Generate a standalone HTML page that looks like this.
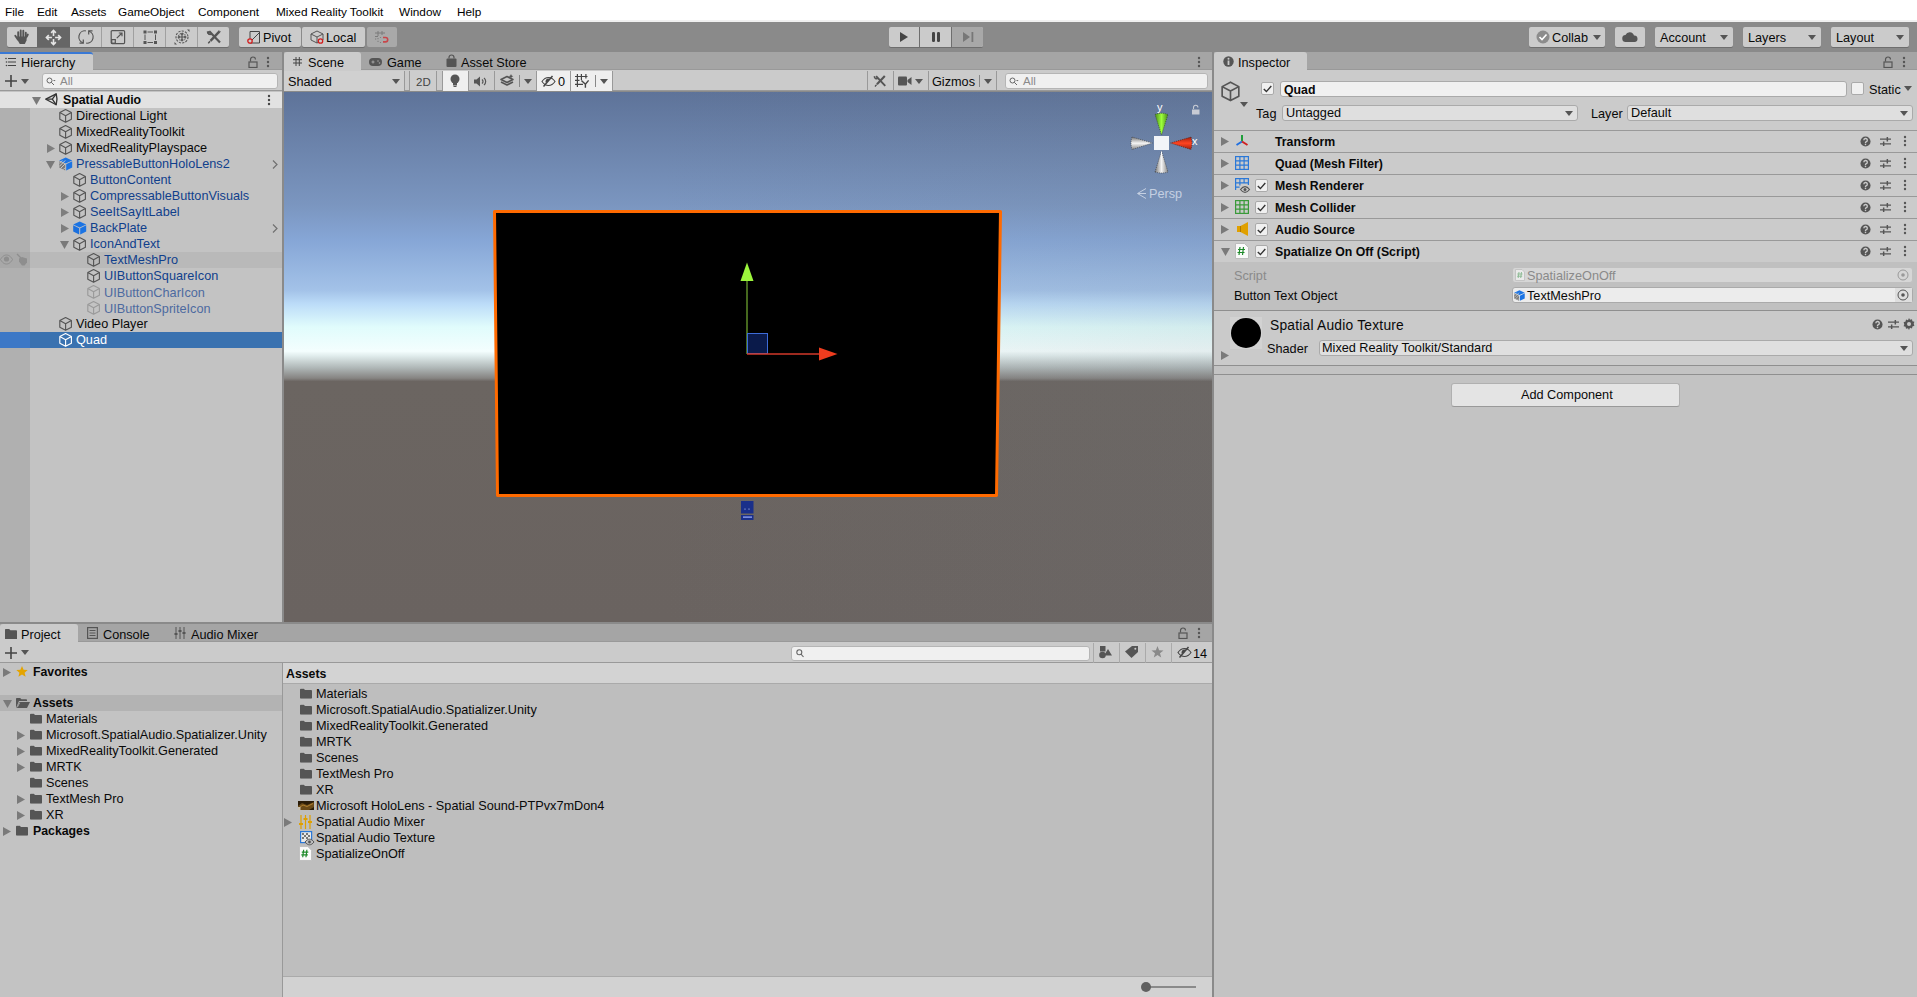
<!DOCTYPE html>
<html><head><meta charset="utf-8">
<style>
*{box-sizing:border-box;margin:0;padding:0}
html,body{width:1917px;height:997px;overflow:hidden;background:#8a8a8a;font-family:"Liberation Sans",sans-serif;font-size:12.7px;color:#090909}
.a{position:absolute}
.t{position:absolute;white-space:nowrap;line-height:16px}
.b{font-weight:bold;font-size:12.3px}
svg{position:absolute;overflow:visible}
/* menu */
#menu{left:0;top:0;width:1917px;height:22px;background:#fff;border-bottom:2px solid #f0f0f0}
#menu span{position:absolute;top:5px;font-size:11.8px;line-height:14px;color:#000}
/* toolbar */
#tb{left:0;top:22px;width:1917px;height:30px;background:#8a8a8a}
.btn{position:absolute;top:27px;height:20px;background:#cbcbcb;border-radius:2px;box-shadow:0 1px 0 #6e6e6e}
/* panels */
.tabbar{position:absolute;height:18px;background:#a5a5a5;border-bottom:1px solid #999}
.tab{position:absolute;top:0;height:18px;background:#cbcbcb;border-radius:3px 3px 0 0}
.ptool{position:absolute;height:21px;background:#cbcbcb;border-bottom:1px solid #999}
.search{position:absolute;height:15px;background:#f0f0f0;border:1px solid #b5b5b5;border-radius:3px}
.sep{position:absolute;background:#999}
.hrow{position:absolute;height:16px;left:30px;width:252px}
.blue{color:#10408c}
.dim{color:#4f6fa6}
.dimi{opacity:.55}
.ih{position:absolute;height:22px;left:1214px;width:703px;background:#cbcbcb;border-top:1px solid #999}
.chk{position:absolute;width:13px;height:13px;background:#f0f0f0;border:1px solid #aaa;border-radius:2px}
.fld{position:absolute;height:16px;background:#f0f0f0;border:1px solid #aaa;border-radius:3px}
.dd{position:absolute;height:16px;background:#dfdfdf;border:1px solid #aaa;border-radius:3px}
</style></head><body>
<svg width="0" height="0" style="position:absolute"><defs>
<symbol id="cube" viewBox="0 0 16 16"><path d="M6.6 1.5L12.4 4.6V11.3L6.6 14.3L0.8 11.3V4.6Z M0.8 4.6L6.6 7.7L12.4 4.6 M6.6 7.7V14.3" fill="none" stroke="currentColor" stroke-width="1.15" stroke-linejoin="round"/></symbol>
<symbol id="prefab" viewBox="1.3 0 16 16"><path d="M8 1.5L14.5 4.5L8 7.5L1.5 4.5Z" fill="#1b74e4"/><path d="M8.5 8.2L14.5 5.3V11.6L8.5 14.6Z" fill="#1b74e4"/><path d="M1.5 5.3L7.5 8.2V14.6L1.5 11.6Z" fill="#7a7a7a"/><path d="M1.5 7.5l3-3M1.5 10.5l6-6M3 12.3l4.5-4.5M5.5 13.6l2-2" stroke="#c8c8c8" stroke-width="1"/></symbol>
<symbol id="prefabs" viewBox="1.3 0 16 16"><path d="M8 1.5L14.5 4.5L8 7.5L1.5 4.5Z" fill="#1b74e4"/><path d="M8.5 8.2L14.5 5.3V11.6L8.5 14.6Z" fill="#1b74e4"/><path d="M1.5 5.3L7.5 8.2V14.6L1.5 11.6Z" fill="#1b70de"/></symbol>
<symbol id="tri-d" viewBox="0 0 9 8"><path d="M0 0h9L4.5 8z" fill="currentColor"/></symbol>
<symbol id="tri-r" viewBox="0 0 8 9"><path d="M0 0v9l8-4.5z" fill="currentColor"/></symbol>
<symbol id="folder" viewBox="0 0 14 12"><path d="M0 1.5a1 1 0 0 1 1-1h3.5l1.3 1.5H13a1 1 0 0 1 1 1V11a1 1 0 0 1-1 1H1a1 1 0 0 1-1-1z" fill="currentColor"/></symbol>
<symbol id="dots" viewBox="0 0 4 12"><circle cx="2" cy="2" r="1.2" fill="currentColor"/><circle cx="2" cy="6" r="1.2" fill="currentColor"/><circle cx="2" cy="10" r="1.2" fill="currentColor"/></symbol>
<symbol id="lock" viewBox="0 0 10 12"><path d="M2.5 5.5V3.5a2.5 2.5 0 0 1 5 0" fill="none" stroke="currentColor" stroke-width="1.2"/><rect x="1" y="6" width="8" height="5.5" fill="none" stroke="currentColor" stroke-width="1.2"/></symbol>
<symbol id="help" viewBox="0 0 12 12"><circle cx="6" cy="6" r="5.5" fill="currentColor"/><path d="M4.2 4.6a1.9 1.9 0 1 1 2.4 1.8c-.5.2-.6.5-.6 1v.4" fill="none" stroke="#cbcbcb" stroke-width="1.5"/><circle cx="6" cy="9.3" r=".9" fill="#cbcbcb"/></symbol>
<symbol id="preset" viewBox="0 0 12 12"><path d="M0 3.5h12M0 8.5h12" stroke="currentColor" stroke-width="1.3"/><path d="M8 1v5M4 6v5" stroke="currentColor" stroke-width="1.6"/></symbol>
</defs></svg>

<!-- MENU -->
<div id="menu" class="a">
<span style="left:5px">File</span>
<span style="left:37px">Edit</span>
<span style="left:71px">Assets</span>
<span style="left:118px">GameObject</span>
<span style="left:198px">Component</span>
<span style="left:276px">Mixed Reality Toolkit</span>
<span style="left:399px">Window</span>
<span style="left:457px">Help</span>
</div>

<!-- MAIN TOOLBAR -->
<div id="tb" class="a"></div>
<div class="btn" style="left:7px;width:222px"></div>
<div class="a" style="left:37px;top:27px;width:33px;height:20px;background:#666"></div>
<div class="sep" style="left:101px;top:27px;width:1px;height:20px;background:#a0a0a0"></div>
<div class="sep" style="left:133px;top:27px;width:1px;height:20px;background:#a0a0a0"></div>
<div class="sep" style="left:165px;top:27px;width:1px;height:20px;background:#a0a0a0"></div>
<div class="sep" style="left:197px;top:27px;width:1px;height:20px;background:#a0a0a0"></div>
<svg style="left:14px;top:29px" width="16" height="16" viewBox="0 0 16 16"><path d="M4.2 9.5V3.2M6.7 8V1.5M9.3 8V1.8M11.8 8.5V3.8" stroke="#555" stroke-width="1.9" stroke-linecap="round"/><path d="M1.3 6.8L3.8 10.5" stroke="#555" stroke-width="1.9" stroke-linecap="round"/><path d="M3.3 7.5H12.8L12.5 11.5 10.8 15H5.8L3.3 10.8z" fill="#555"/><path d="M12.8 7.5L13.8 5.5" stroke="#555" stroke-width="1.9" stroke-linecap="round"/></svg>
<svg style="left:45px;top:29px" width="17" height="17" viewBox="0 0 16 16" fill="none" stroke="#e6e6e6" stroke-width="1.5"><path d="M8 2v4.5M8 9.5V14M2 8h4.5M9.5 8H14"/><path d="M5.8 3.6L8 1.4l2.2 2.2M5.8 12.4L8 14.6l2.2-2.2M3.6 5.8L1.4 8l2.2 2.2M12.4 5.8L14.6 8l-2.2 2.2" stroke-width="1.6"/></svg>
<svg style="left:78px;top:29px" width="16" height="16" viewBox="0 0 16 16" fill="none" stroke="#555" stroke-width="1.2"><path d="M7.8 1.8A6.2 6.2 0 0 0 5 13.8"/><path d="M8.2 14.2A6.2 6.2 0 0 0 11 2.2"/><path d="M1.5 14.2H5.3V10.5M14.5 1.8H10.7V5.5"/></svg>
<svg style="left:110px;top:29px" width="16" height="16" viewBox="0 0 16 16" fill="none" stroke="#555" stroke-width="1.2"><rect x="1.2" y="1.6" width="13.4" height="13" rx="1"/><rect x="1.7" y="10.6" width="3.6" height="3.6"/><path d="M6.8 9.2L12 4M8.8 4H12V7.2"/></svg>
<svg style="left:142px;top:29px" width="16" height="16" viewBox="0 0 16 16"><g fill="#555"><rect x="1.5" y="1.5" width="3" height="3"/><rect x="12" y="1.5" width="3" height="3"/><rect x="1.5" y="12" width="3" height="3"/><rect x="12" y="12" width="3" height="3"/></g><path d="M5.5 3h5.5M5.5 13.5h5.5M3 5.5v5.5M13.5 5.5v5.5" stroke="#555" stroke-width="1"/></svg>
<svg style="left:174px;top:29px" width="16" height="16" viewBox="0 0 16 16" fill="none" stroke="#555"><circle cx="8" cy="8" r="6" stroke-width="1.1" stroke-dasharray="2.2 1.2"/><circle cx="8" cy="8" r="3.8" stroke-width="1" stroke-dasharray="1.5 1"/><path d="M8 4.5v7M4.5 8h7" stroke-width="1.2"/><path d="M6.8 5.7L8 4.5l1.2 1.2M6.8 10.3L8 11.5l1.2-1.2M5.7 6.8L4.5 8l1.2 1.2M10.3 6.8L11.5 8l-1.2 1.2" stroke-width="1.2"/><path d="M13 0.5h2.5V3zM3 15.5H.5V13z" fill="#555" stroke="none"/></svg>
<svg style="left:206px;top:29px" width="16" height="16" viewBox="0 0 16 16"><path d="M3.5 2.5L14 13.5" stroke="#555" stroke-width="2.2"/><path d="M1.2 3.5A2.8 2.8 0 0 0 5 5.8L3.2 4.2 4.3 1.7A2.8 2.8 0 0 0 1.2 3.5z" fill="#555"/><path d="M1.6 2.4a2.6 2.6 0 0 0 3.8 2.7" stroke="#555" stroke-width="1.6" fill="none"/><path d="M13.5 2.3L4.5 11.8" stroke="#555" stroke-width="2.4"/><path d="M4.1 12.2L2.3 14.3 3 13.2" stroke="#555" stroke-width="1.4"/><path d="M13 1.5l1.5 1.5" stroke="#555" stroke-width="1"/></svg>
<div class="sep" style="left:229px;top:27px;width:1px;height:20px;background:#8a8a8a"></div>
<div class="btn" style="left:239px;width:62px"></div>
<div class="btn" style="left:302px;width:63px"></div>
<div class="a" style="left:367px;top:27px;width:30px;height:20px;background:#a9a9a9;border-radius:2px"></div>
<svg style="left:247px;top:30px" width="14" height="14" viewBox="0 0 14 14" fill="none"><path d="M3 1.5h9.5V13H3z" stroke="#444" stroke-width="1"/><path d="M5 10l7-7" stroke="#444" stroke-width="1"/><circle cx="3" cy="11" r="2.2" stroke="#d31e1e" stroke-width="1.3" fill="#cbcbcb"/></svg>
<span class="t" style="left:263px;top:30px;font-size:12.7px">Pivot</span>
<svg style="left:310px;top:30px" width="14" height="14" viewBox="0 0 14 14" fill="none" stroke="#555" stroke-width="1"><path d="M1 4l6-3 6 3v6l-6 3-6-3z M1 4l6 3 6-3M7 7v6"/><circle cx="10.5" cy="11" r="2.2" stroke="#d31e1e" stroke-width="1.3" fill="#cbcbcb"/></svg>
<span class="t" style="left:326px;top:30px;font-size:12.7px">Local</span>
<svg style="left:374px;top:30px" width="15" height="14" viewBox="0 0 15 14" fill="none"><path d="M4 1v5M8 1v4M1 3h10M1 6.5h3" stroke="#7a7a7a" stroke-width="1"/><path d="M4 8v1.2M4 10.8V12M1 9h1.2" stroke="#7a7a7a" stroke-width="1"/><circle cx="6.5" cy="7.5" r=".6" fill="#7a7a7a"/><circle cx="6.5" cy="12.5" r=".6" fill="#7a7a7a"/><path d="M9 7.5h2.5a2.2 2.2 0 0 1 0 4.4H9" stroke="#c8464a" stroke-width="1.6"/></svg>
<div class="btn" style="left:889px;width:94px;background:#cbcbcb"></div>
<div class="a" style="left:951px;top:27px;width:32px;height:20px;background:#a8a8a8;border-radius:0 2px 2px 0"></div>
<div class="sep" style="left:919px;top:27px;width:1px;height:20px;background:#6e6e6e"></div>
<div class="sep" style="left:951px;top:27px;width:1px;height:20px;background:#6e6e6e"></div>
<svg style="left:900px;top:32px" width="10" height="12" viewBox="0 0 10 12"><path d="M0 0v10l8-5z" fill="#444"/></svg>
<svg style="left:932px;top:32px" width="10" height="12" viewBox="0 0 10 12"><rect x="0" y="0" width="3" height="10" rx="1.2" fill="#444"/><rect x="5" y="0" width="3" height="10" rx="1.2" fill="#444"/></svg>
<svg style="left:963px;top:32px" width="12" height="12" viewBox="0 0 12 12"><path d="M0 0v10l7-5z" fill="#777"/><rect x="8.5" y="0" width="1.8" height="10" fill="#777"/></svg>
<div class="btn" style="left:1529px;width:76px"></div>
<svg style="left:1536px;top:30px" width="14" height="14" viewBox="0 0 14 14"><circle cx="7" cy="7" r="6.5" fill="#8c8c8c"/><path d="M3.5 7l2.5 2.5 4.5-5" stroke="#fff" stroke-width="1.6" fill="none"/></svg>
<span class="t" style="left:1552px;top:30px">Collab</span>
<svg style="left:1593px;top:35px" width="8" height="5" viewBox="0 0 8 5"><path d="M0 0h8L4 5z" fill="#555"/></svg>
<div class="btn" style="left:1615px;width:30px"></div>
<svg style="left:1622px;top:31px" width="16" height="12" viewBox="0 0 16 12"><path d="M4 11a3.5 3.5 0 0 1-.5-7A4.5 4.5 0 0 1 12 4.5 3.2 3.2 0 0 1 12.5 11z" fill="#555"/></svg>
<div class="btn" style="left:1655px;width:78px"></div>
<span class="t" style="left:1660px;top:30px">Account</span>
<svg style="left:1720px;top:35px" width="8" height="5" viewBox="0 0 8 5"><path d="M0 0h8L4 5z" fill="#555"/></svg>
<div class="btn" style="left:1743px;width:78px"></div>
<span class="t" style="left:1748px;top:30px">Layers</span>
<svg style="left:1808px;top:35px" width="8" height="5" viewBox="0 0 8 5"><path d="M0 0h8L4 5z" fill="#555"/></svg>
<div class="btn" style="left:1831px;width:78px"></div>
<span class="t" style="left:1836px;top:30px">Layout</span>
<svg style="left:1896px;top:35px" width="8" height="5" viewBox="0 0 8 5"><path d="M0 0h8L4 5z" fill="#555"/></svg>

<!-- HIERARCHY -->
<div class="a" style="left:0;top:52px;width:282px;height:570px;background:#c3c3c3"></div>
<div class="tabbar" style="left:0;top:52px;width:282px"></div>
<div class="tab" style="left:0;top:52px;width:93px;border-top:2px solid #3a79d5;border-radius:0 3px 0 0"></div>
<div class="ptool" style="left:0;top:70px;width:282px"></div>
<div class="a" style="left:0;top:108px;width:30px;height:514px;background:#b0b0b0"></div>
<div class="a" style="left:0;top:92px;width:282px;height:16px;background:#e2e2e2"></div>
<svg style="left:5px;top:57px;color:#444" width="11" height="10" viewBox="0 0 11 10"><path d="M3 1.5h8M3 5h8M3 8.5h8" stroke="#444" stroke-width="1.2"/><circle cx="1" cy="1.5" r=".8" fill="#444"/><circle cx="1.5" cy="5" r=".8" fill="#444"/><circle cx="1.5" cy="8.5" r=".8" fill="#444"/></svg>
<span class="t" style="left:21px;top:55px">Hierarchy</span>
<svg style="left:248px;top:56px;color:#555" width="10" height="12"><use href="#lock"/></svg>
<svg style="left:266px;top:56px;color:#555" width="4" height="12"><use href="#dots"/></svg>
<svg style="left:5px;top:75px" width="12" height="12" viewBox="0 0 12 12"><path d="M6 0v12M0 6h12" stroke="#444" stroke-width="1.6"/></svg>
<svg style="left:21px;top:79px" width="8" height="5" viewBox="0 0 8 5"><path d="M0 0h8L4 5z" fill="#555"/></svg>
<div class="search" style="left:42px;top:73px;width:236px;height:16px"></div>
<svg style="left:46px;top:77px" width="10" height="9" viewBox="0 0 10 9" fill="none" stroke="#666" stroke-width="1"><circle cx="3.5" cy="3.5" r="2.5"/><path d="M5.3 5.3L8 8"/><path d="M7 3h2.6L8.3 4.3z" fill="#666" stroke="none"/></svg>
<span class="t" style="left:60px;top:73px;color:#8a8a8a;font-size:11.5px">All</span>
<svg style="left:32px;top:97px;color:#7a7a7a" width="9" height="8"><use href="#tri-d"/></svg>
<svg style="left:45px;top:93px" width="13" height="13" viewBox="0 0 13 13" fill="none" stroke="#333" stroke-width="1.3" stroke-linejoin="round"><path d="M.8 6.2L11.2 .8Q12.8 6.2 11.2 11.8Z"/><path d="M.8 6.2H7.3L11.2 .8M7.3 6.2L11.2 11.8"/></svg>
<span class="t b" style="left:63px;top:92px;color:#090909">Spatial Audio</span>
<svg style="left:59px;top:108px;color:#555" width="16" height="16"><use href="#cube"/></svg>
<span class="t" style="left:76px;top:108px;color:#090909">Directional Light</span>
<svg style="left:59px;top:124px;color:#555" width="16" height="16"><use href="#cube"/></svg>
<span class="t" style="left:76px;top:124px;color:#090909">MixedRealityToolkit</span>
<svg style="left:47px;top:144px;color:#7e7e7e" width="8" height="9"><use href="#tri-r"/></svg>
<svg style="left:59px;top:140px;color:#555" width="16" height="16"><use href="#cube"/></svg>
<span class="t" style="left:76px;top:140px;color:#090909">MixedRealityPlayspace</span>
<svg style="left:46px;top:161px;color:#7a7a7a" width="9" height="8"><use href="#tri-d"/></svg>
<svg style="left:59px;top:156px;color:#555" width="16" height="16"><use href="#prefab"/></svg>
<span class="t" style="left:76px;top:156px;color:#10408c">PressableButtonHoloLens2</span>
<svg style="left:272px;top:160px" width="6" height="9" viewBox="0 0 6 9"><path d="M1 .5l4 4-4 4" fill="none" stroke="#707070" stroke-width="1.2"/></svg>
<svg style="left:73px;top:172px;color:#555" width="16" height="16"><use href="#cube"/></svg>
<span class="t" style="left:90px;top:172px;color:#10408c">ButtonContent</span>
<svg style="left:61px;top:192px;color:#7e7e7e" width="8" height="9"><use href="#tri-r"/></svg>
<svg style="left:73px;top:188px;color:#555" width="16" height="16"><use href="#cube"/></svg>
<span class="t" style="left:90px;top:188px;color:#10408c">CompressableButtonVisuals</span>
<svg style="left:61px;top:208px;color:#7e7e7e" width="8" height="9"><use href="#tri-r"/></svg>
<svg style="left:73px;top:204px;color:#555" width="16" height="16"><use href="#cube"/></svg>
<span class="t" style="left:90px;top:204px;color:#10408c">SeeItSayItLabel</span>
<svg style="left:61px;top:224px;color:#7e7e7e" width="8" height="9"><use href="#tri-r"/></svg>
<svg style="left:73px;top:220px;color:#555" width="16" height="16"><use href="#prefabs"/></svg>
<span class="t" style="left:90px;top:220px;color:#10408c">BackPlate</span>
<svg style="left:272px;top:224px" width="6" height="9" viewBox="0 0 6 9"><path d="M1 .5l4 4-4 4" fill="none" stroke="#707070" stroke-width="1.2"/></svg>
<svg style="left:60px;top:241px;color:#7a7a7a" width="9" height="8"><use href="#tri-d"/></svg>
<svg style="left:73px;top:236px;color:#555" width="16" height="16"><use href="#cube"/></svg>
<span class="t" style="left:90px;top:236px;color:#10408c">IconAndText</span>
<div class="a" style="left:30px;top:252px;width:252px;height:16px;background:#b9b9b9"></div>
<div class="a" style="left:0;top:252px;width:30px;height:16px;background:#a8a8a8"></div>
<svg style="left:0;top:254px" width="13" height="11" viewBox="0 0 13 11"><path d="M.5 5.5C2.5 2 4.5 1 6.5 1s4 1 6 4.5c-2 3.5-4 4.5-6 4.5s-4-1-6-4.5z" fill="none" stroke="#8e8e8e" stroke-width="1"/><circle cx="6.5" cy="5" r="2.6" fill="#8e8e8e"/></svg>
<svg style="left:16px;top:253px" width="12" height="13" viewBox="0 0 12 13"><path d="M1 1l4 4" stroke="#8e8e8e" stroke-width="1.3"/><path d="M3 5.5l3-1.5 5 1.5v4l-2.5 3H6L3 8.5z" fill="#8e8e8e"/></svg>
<svg style="left:87px;top:252px;color:#555" width="16" height="16"><use href="#cube"/></svg>
<span class="t" style="left:104px;top:252px;color:#10408c">TextMeshPro</span>
<svg style="left:87px;top:268px;color:#555" width="16" height="16"><use href="#cube"/></svg>
<span class="t" style="left:104px;top:268px;color:#10408c">UIButtonSquareIcon</span>
<svg style="left:87px;top:284px;color:#9a9a9a" width="16" height="16"><use href="#cube"/></svg>
<span class="t" style="left:104px;top:285px;color:#4d6aa0">UIButtonCharIcon</span>
<svg style="left:87px;top:300px;color:#9a9a9a" width="16" height="16"><use href="#cube"/></svg>
<span class="t" style="left:104px;top:301px;color:#4d6aa0">UIButtonSpriteIcon</span>
<svg style="left:59px;top:316px;color:#555" width="16" height="16"><use href="#cube"/></svg>
<span class="t" style="left:76px;top:316px;color:#090909">Video Player</span>
<div class="a" style="left:30px;top:332px;width:252px;height:16px;background:#3a72b0"></div>
<div class="a" style="left:0;top:332px;width:30px;height:16px;background:#3d78c6"></div>
<svg style="left:59px;top:332px;color:#fff" width="16" height="16"><use href="#cube"/></svg>
<span class="t" style="left:76px;top:332px;color:#fff">Quad</span>
<svg style="left:267px;top:94px;color:#444" width="4" height="12"><use href="#dots"/></svg>

<!-- SCENE -->
<div class="a" style="left:282px;top:52px;width:2px;height:572px;background:#8a8a8a"></div>
<div class="tabbar" style="left:284px;top:52px;width:928px"></div>
<div class="tab" style="left:284px;top:52px;width:77px"></div>
<div class="ptool" style="left:284px;top:70px;width:928px"></div>
<div class="a" style="left:284px;top:92px;width:928px;height:530px;background:linear-gradient(to right,rgba(110,120,130,0) 0%,rgba(110,120,130,0) 40%,rgba(110,120,130,.12) 100%),linear-gradient(#5e7399 0%,#7b96c0 21.5%,#86a6d6 27.9%,#a3c2e8 37.4%,#bcdcf8 40%,#e0fcfc 44.3%,#f4fefe 48.9%,#e0ecec 49.8%,#b0b8b8 52%,#868482 54%,#6b6561 54.6%,#6a6360 100%)"></div>
<svg style="left:293px;top:57px" width="9" height="9" viewBox="0 0 9 9"><path d="M3 0v9M6.3 0v9M0 2.7h9M0 6h9" stroke="#444" stroke-width="1"/></svg>
<span class="t" style="left:308px;top:55px">Scene</span>
<svg style="left:369px;top:58px" width="13" height="8" viewBox="0 0 13 8"><rect x="0" y="0" width="13" height="8" rx="4" fill="#555"/><path d="M2.5 4h3M4 2.5v3" stroke="#a5a5a5" stroke-width="1"/><circle cx="9" cy="3" r=".8" fill="#a5a5a5"/><circle cx="10.5" cy="5" r=".8" fill="#a5a5a5"/></svg>
<span class="t" style="left:387px;top:55px">Game</span>
<svg style="left:446px;top:55px" width="11" height="12" viewBox="0 0 11 12"><path d="M3 3.5V2.5a2.5 2.5 0 0 1 5 0v1" fill="none" stroke="#555" stroke-width="1.2"/><rect x="0.5" y="3.5" width="10" height="8.5" rx="1" fill="#555"/></svg>
<span class="t" style="left:461px;top:55px">Asset Store</span>
<svg style="left:1197px;top:56px;color:#555" width="4" height="12"><use href="#dots"/></svg>
<div class="a" style="left:284px;top:71px;width:120px;height:20px;background:#d0d0d0"></div>
<span class="t" style="left:288px;top:74px">Shaded</span>
<svg style="left:392px;top:79px" width="8" height="5" viewBox="0 0 8 5"><path d="M0 0h8L4 5z" fill="#555"/></svg>
<div class="sep" style="left:404px;top:71px;width:1px;height:20px"></div>
<div class="sep" style="left:409px;top:71px;width:1px;height:20px"></div>
<div class="a" style="left:410px;top:71px;width:26px;height:20px;background:#cdcdcd"></div>
<span class="t" style="left:416px;top:74px;font-size:11.5px;color:#444">2D</span>
<div class="sep" style="left:436px;top:71px;width:1px;height:20px"></div>
<div class="sep" style="left:442px;top:71px;width:1px;height:20px"></div>
<div class="a" style="left:443px;top:71px;width:25px;height:20px;background:#efefef"></div>
<svg style="left:450px;top:74px" width="10" height="14" viewBox="0 0 10 14"><circle cx="5" cy="5" r="4.5" fill="#555"/><path d="M3 9h4v2.5H3z" fill="#555"/><path d="M3.5 12.5h3" stroke="#555" stroke-width="1"/></svg>
<div class="sep" style="left:468px;top:71px;width:1px;height:20px"></div>
<svg style="left:474px;top:76px" width="13" height="11" viewBox="0 0 13 11"><path d="M0 3.5h2.5L6 .5v10L2.5 7.5H0z" fill="#555"/><path d="M8 3.5a2.5 2.5 0 0 1 0 4M10 2a4.5 4.5 0 0 1 0 7" fill="none" stroke="#555" stroke-width="1.2"/></svg>
<div class="sep" style="left:494px;top:71px;width:1px;height:20px"></div>
<svg style="left:500px;top:74px" width="14" height="13" viewBox="0 0 14 13"><path d="M1 8l6 3 6-3M1 5.5l6 3 6-3L7 2.5z" fill="none" stroke="#555" stroke-width="1.6" stroke-linejoin="round"/><path d="M11 0l.7 1.6 1.6.7-1.6.7L11 4.6l-.7-1.6-1.6-.7 1.6-.7z" fill="#555"/></svg>
<div class="sep" style="left:519px;top:75px;width:1px;height:12px;background:#888"></div>
<svg style="left:524px;top:79px" width="8" height="5" viewBox="0 0 8 5"><path d="M0 0h8L4 5z" fill="#555"/></svg>
<div class="sep" style="left:536px;top:71px;width:1px;height:20px"></div>
<div class="a" style="left:537px;top:71px;width:33px;height:20px;background:#efefef"></div>
<svg style="left:541px;top:75px" width="15" height="12" viewBox="0 0 15 12"><path d="M1 6.5C3 3.5 5 2.5 7.5 2.5S12 3.5 14 6.5C12 9.5 10 10.5 7.5 10.5S3 9.5 1 6.5z" fill="none" stroke="#444" stroke-width="1.1"/><path d="M7.5 3.5a3 3 0 0 0-2.6 4.5L8.8 3.8A3 3 0 0 0 7.5 3.5z" fill="#444"/><path d="M2.5 11.5L11.5 1" stroke="#444" stroke-width="1.5"/></svg>
<span class="t" style="left:558px;top:74px">0</span>
<div class="sep" style="left:570px;top:71px;width:1px;height:20px"></div>
<div class="a" style="left:571px;top:71px;width:41px;height:20px;background:#efefef"></div>
<svg style="left:575px;top:74px" width="15" height="14" viewBox="0 0 15 14" fill="none" stroke="#444" stroke-width="1.2"><path d="M2.4 0V13M6.4 0V6M10.9 0V4.5M0 2.5H12.5M0 6.4H4.5M0 10.4H8"/><path d="M6.4 6.6L10.4 10.2L13.6 6.4M10.4 10.2V13.8" stroke-width="1.4"/></svg>
<div class="sep" style="left:595px;top:75px;width:1px;height:12px;background:#888"></div>
<svg style="left:600px;top:79px" width="8" height="5" viewBox="0 0 8 5"><path d="M0 0h8L4 5z" fill="#555"/></svg>
<div class="sep" style="left:612px;top:71px;width:1px;height:20px"></div>
<div class="sep" style="left:867px;top:71px;width:1px;height:20px"></div>
<svg style="left:873px;top:74px" width="14" height="14" viewBox="0 0 16 16"><path d="M3.5 2.5L14 13.5" stroke="#555" stroke-width="2.2"/><path d="M1.6 2.4a2.6 2.6 0 0 0 3.8 2.7" stroke="#555" stroke-width="1.6" fill="none"/><path d="M13.5 2.3L4.5 11.8" stroke="#555" stroke-width="2.4"/><path d="M4.1 12.2L2.3 14.3 3 13.2" stroke="#555" stroke-width="1.4"/></svg>
<div class="sep" style="left:893px;top:71px;width:1px;height:20px"></div>
<svg style="left:898px;top:76px" width="14" height="10" viewBox="0 0 14 10"><rect x="0" y="0.5" width="9" height="9" rx="1" fill="#555"/><path d="M9.5 4l4-3v8l-4-3z" fill="#555"/></svg>
<svg style="left:915px;top:79px" width="8" height="5" viewBox="0 0 8 5"><path d="M0 0h8L4 5z" fill="#555"/></svg>
<div class="sep" style="left:928px;top:71px;width:1px;height:20px"></div>
<span class="t" style="left:932px;top:74px">Gizmos</span>
<div class="sep" style="left:979px;top:75px;width:1px;height:12px;background:#888"></div>
<svg style="left:984px;top:79px" width="8" height="5" viewBox="0 0 8 5"><path d="M0 0h8L4 5z" fill="#555"/></svg>
<div class="sep" style="left:996px;top:71px;width:1px;height:20px"></div>
<div class="search" style="left:1005px;top:73px;width:203px;height:16px"></div>
<svg style="left:1009px;top:77px" width="10" height="9" viewBox="0 0 10 9" fill="none" stroke="#666" stroke-width="1"><circle cx="3.5" cy="3.5" r="2.5"/><path d="M5.3 5.3L8 8"/><path d="M7 3h2.6L8.3 4.3z" fill="#666" stroke="none"/></svg>
<span class="t" style="left:1023px;top:73px;color:#8a8a8a;font-size:11.5px">All</span>
<svg style="left:284px;top:92px" width="928" height="530" viewBox="284 92 928 530">
<defs>
<linearGradient id="gG" x1="0" y1="0" x2="1" y2="0"><stop offset="0" stop-color="#4a8a1a"/><stop offset=".5" stop-color="#9cff3a"/><stop offset="1" stop-color="#4a8a1a"/></linearGradient>
<linearGradient id="gR" x1="0" y1="0" x2="0" y2="1"><stop offset="0" stop-color="#a02010"/><stop offset=".5" stop-color="#ff4420"/><stop offset="1" stop-color="#a02010"/></linearGradient>
<linearGradient id="gW" x1="0" y1="0" x2="0" y2="1"><stop offset="0" stop-color="#777"/><stop offset=".5" stop-color="#f4f4f4"/><stop offset="1" stop-color="#888"/></linearGradient>
<linearGradient id="gW2" x1="0" y1="0" x2="1" y2="0"><stop offset="0" stop-color="#777"/><stop offset=".5" stop-color="#f4f4f4"/><stop offset="1" stop-color="#888"/></linearGradient>
</defs>
<path d="M494.5 211.5H1000.5L996.5 495.5H497.5Z" fill="#000" stroke="#ff6a00" stroke-width="3" stroke-linejoin="round"/>
<path d="M747 281V354" stroke="#8cd23c" stroke-width="1"/>
<path d="M747 262.5L753.5 281H740.5Z" fill="#9cf53c"/>
<rect x="747.5" y="333.5" width="20" height="20" fill="#0a1a4a" stroke="#3d6bd8" stroke-width="1"/>
<path d="M747 354H820" stroke="#d2382a" stroke-width="1.5"/>
<path d="M837.5 354L819 347.5V360.5Z" fill="#ee3c1e"/>
<rect x="741" y="501" width="12.5" height="12.5" fill="#1a2f8a"/>
<rect x="741" y="515" width="12.5" height="5" fill="#1a2f8a"/>
<rect x="743" y="516.5" width="9" height="1.2" fill="#9fb0ff"/>
<circle cx="745" cy="509" r=".6" fill="#cfd8ff"/><circle cx="749" cy="509" r=".6" fill="#cfd8ff"/>
<!-- orientation gizmo -->
<path d="M1155 114.5Q1161.5 112 1168 114.5L1161.5 135Z" fill="url(#gG)" stroke="#2a3a20" stroke-width=".6" stroke-dasharray="1 1"/>
<path d="M1191 137Q1193 143 1191 149.5L1170.5 143Z" fill="url(#gR)" stroke="#3a1a10" stroke-width=".6" stroke-dasharray="1 1"/>
<path d="M1132 137Q1130 143 1132 149.5L1152.5 143Z" fill="url(#gW)" stroke="#333" stroke-width=".6" stroke-dasharray="1 1"/>
<path d="M1155 172Q1161.5 174 1168 172L1161.5 151Z" fill="url(#gW2)" stroke="#333" stroke-width=".6" stroke-dasharray="1 1"/>
<rect x="1154" y="136" width="15" height="14" fill="#f2f4f8"/>
<path d="M1161.5 151.5v4" stroke="#fff" stroke-width="1"/>
<text x="1157" y="111" font-family="Liberation Sans" font-size="11" fill="#fff">y</text>
<text x="1192" y="145" font-family="Liberation Sans" font-size="11" fill="#fff">x</text>
<path d="M1193.5 109V107.5a2.2 2.2 0 0 1 4.4 0" fill="none" stroke="#c8cbd4" stroke-width="1.1"/>
<rect x="1192" y="109.5" width="7.5" height="5" fill="#c8cbd4"/>
<path d="M1146 188.5L1137.5 193.5L1146 198.5M1146 193.5H1138" fill="none" stroke="#c5d0e2" stroke-width="1"/>
<text x="1149" y="198" font-family="Liberation Sans" font-size="12.7" fill="#c5d0e2">Persp</text>
</svg>
<div class="a" style="left:1212px;top:52px;width:2px;height:945px;background:#8a8a8a"></div>

<!-- INSPECTOR -->
<div class="a" style="left:1214px;top:52px;width:703px;height:945px;background:#c3c3c3"></div>
<div class="tabbar" style="left:1214px;top:52px;width:703px"></div>
<div class="tab" style="left:1214px;top:52px;width:93px"></div>
<div class="a" style="left:1214px;top:70px;width:703px;height:60px;background:#cbcbcb"></div>
<svg style="left:1223px;top:56px" width="11" height="11" viewBox="0 0 11 11"><circle cx="5.5" cy="5.5" r="5.2" fill="#555"/><rect x="4.6" y="4.5" width="1.8" height="4.5" fill="#cbcbcb"/><circle cx="5.5" cy="2.8" r="1" fill="#cbcbcb"/></svg>
<span class="t" style="left:1238px;top:55px">Inspector</span>
<svg style="left:1883px;top:56px;color:#555" width="10" height="12"><use href="#lock"/></svg>
<svg style="left:1902px;top:56px;color:#555" width="4" height="12"><use href="#dots"/></svg>
<svg style="left:1221px;top:80px;color:#555" width="23" height="23" viewBox="0 0 16 16"><use href="#cube"/></svg>
<svg style="left:1240px;top:102px" width="8" height="5" viewBox="0 0 8 5"><path d="M0 0h8L4 5z" fill="#555"/></svg>
<div class="chk" style="left:1261px;top:82px"></div><svg style="left:1263px;top:85px" width="9" height="8" viewBox="0 0 9 8"><path d="M.8 4l2.6 2.6L8.3 1" fill="none" stroke="#333" stroke-width="1.4"/></svg>
<div class="fld" style="left:1280px;top:81px;width:567px;height:16px"></div>
<span class="t b" style="left:1284px;top:82px">Quad</span>
<div class="chk" style="left:1851px;top:82px"></div>
<span class="t" style="left:1869px;top:82px">Static</span>
<svg style="left:1904px;top:86px" width="8" height="5" viewBox="0 0 8 5"><path d="M0 0h8L4 5z" fill="#555"/></svg>
<span class="t" style="left:1256px;top:106px">Tag</span>
<div class="dd" style="left:1282px;top:105px;width:296px;height:16px"></div>
<span class="t" style="left:1286px;top:105px">Untagged</span>
<svg style="left:1565px;top:111px" width="8" height="5" viewBox="0 0 8 5"><path d="M0 0h8L4 5z" fill="#555"/></svg>
<span class="t" style="left:1591px;top:106px">Layer</span>
<div class="dd" style="left:1627px;top:105px;width:286px;height:16px"></div>
<span class="t" style="left:1631px;top:105px">Default</span>
<svg style="left:1900px;top:111px" width="8" height="5" viewBox="0 0 8 5"><path d="M0 0h8L4 5z" fill="#555"/></svg>
<div class="ih" style="top:130px"></div>
<svg style="left:1221px;top:137px;color:#7a7a7a" width="8" height="9"><use href="#tri-r"/></svg>
<svg style="left:1235px;top:134px" width="14" height="14" viewBox="0 0 14 14"><path d="M7 1v6" stroke="#1e9e3a" stroke-width="2"/><path d="M7 7.5L1.5 11" stroke="#1f6fe0" stroke-width="2"/><path d="M7 7.5l5.5 3.5" stroke="#d02020" stroke-width="2"/></svg>
<span class="t b" style="left:1275px;top:134px">Transform</span>
<svg style="left:1860px;top:136px;color:#555" width="11" height="11" viewBox="0 0 12 12"><use href="#help"/></svg>
<svg style="left:1880px;top:136px;color:#555" width="11" height="11" viewBox="0 0 12 12"><use href="#preset"/></svg>
<svg style="left:1903px;top:135px;color:#555" width="4" height="12"><use href="#dots"/></svg>
<div class="ih" style="top:152px"></div>
<svg style="left:1221px;top:159px;color:#7a7a7a" width="8" height="9"><use href="#tri-r"/></svg>
<svg style="left:1235px;top:156px" width="14" height="14" viewBox="0 0 14 14" fill="none" stroke="#2a78d8" stroke-width="1.2"><rect x=".6" y=".6" width="12.8" height="12.8"/><path d="M4.9 .6v12.8M9.1 .6v12.8M.6 4.9h12.8M.6 9.1h12.8"/></svg>
<span class="t b" style="left:1275px;top:156px">Quad (Mesh Filter)</span>
<svg style="left:1860px;top:158px;color:#555" width="11" height="11" viewBox="0 0 12 12"><use href="#help"/></svg>
<svg style="left:1880px;top:158px;color:#555" width="11" height="11" viewBox="0 0 12 12"><use href="#preset"/></svg>
<svg style="left:1903px;top:157px;color:#555" width="4" height="12"><use href="#dots"/></svg>
<div class="ih" style="top:174px"></div>
<svg style="left:1221px;top:181px;color:#7a7a7a" width="8" height="9"><use href="#tri-r"/></svg>
<svg style="left:1235px;top:178px" width="15" height="15" viewBox="0 0 15 15" fill="none" stroke="#2a78d8" stroke-width="1.2"><path d="M.6 12V.6h12.8V7M4.9 .6v7M9.1 .6v5M.6 4.9h12.8M.6 9.1h4"/><path d="M5.5 11.5c1.5-2 3-2.8 4.5-2.8s3 .8 4.5 2.8c-1.5 2-3 2.8-4.5 2.8s-3-.8-4.5-2.8z" fill="#cbcbcb" stroke="#555"/><circle cx="10" cy="11.5" r="1.5" fill="#555" stroke="none"/></svg>
<div class="chk" style="left:1255px;top:179px"></div><svg style="left:1257px;top:182px" width="9" height="8" viewBox="0 0 9 8"><path d="M.8 4l2.6 2.6L8.3 1" fill="none" stroke="#333" stroke-width="1.4"/></svg>
<span class="t b" style="left:1275px;top:178px">Mesh Renderer</span>
<svg style="left:1860px;top:180px;color:#555" width="11" height="11" viewBox="0 0 12 12"><use href="#help"/></svg>
<svg style="left:1880px;top:180px;color:#555" width="11" height="11" viewBox="0 0 12 12"><use href="#preset"/></svg>
<svg style="left:1903px;top:179px;color:#555" width="4" height="12"><use href="#dots"/></svg>
<div class="ih" style="top:196px"></div>
<svg style="left:1221px;top:203px;color:#7a7a7a" width="8" height="9"><use href="#tri-r"/></svg>
<svg style="left:1235px;top:200px" width="14" height="14" viewBox="0 0 14 14" fill="none" stroke="#3a9a3a" stroke-width="1.2"><rect x=".6" y=".6" width="12.8" height="12.8"/><path d="M4.9 .6v12.8M9.1 .6v12.8M.6 4.9h12.8M.6 9.1h12.8"/></svg>
<div class="chk" style="left:1255px;top:201px"></div><svg style="left:1257px;top:204px" width="9" height="8" viewBox="0 0 9 8"><path d="M.8 4l2.6 2.6L8.3 1" fill="none" stroke="#333" stroke-width="1.4"/></svg>
<span class="t b" style="left:1275px;top:200px">Mesh Collider</span>
<svg style="left:1860px;top:202px;color:#555" width="11" height="11" viewBox="0 0 12 12"><use href="#help"/></svg>
<svg style="left:1880px;top:202px;color:#555" width="11" height="11" viewBox="0 0 12 12"><use href="#preset"/></svg>
<svg style="left:1903px;top:201px;color:#555" width="4" height="12"><use href="#dots"/></svg>
<div class="ih" style="top:218px"></div>
<svg style="left:1221px;top:225px;color:#7a7a7a" width="8" height="9"><use href="#tri-r"/></svg>
<svg style="left:1237px;top:222px" width="12" height="14" viewBox="0 0 12 14"><path d="M0 4h3.5L11 0v14L3.5 10H0z" fill="#e0a000"/><path d="M3.5 4v6" stroke="#b07800" stroke-width="1"/></svg>
<div class="chk" style="left:1255px;top:223px"></div><svg style="left:1257px;top:226px" width="9" height="8" viewBox="0 0 9 8"><path d="M.8 4l2.6 2.6L8.3 1" fill="none" stroke="#333" stroke-width="1.4"/></svg>
<span class="t b" style="left:1275px;top:222px">Audio Source</span>
<svg style="left:1860px;top:224px;color:#555" width="11" height="11" viewBox="0 0 12 12"><use href="#help"/></svg>
<svg style="left:1880px;top:224px;color:#555" width="11" height="11" viewBox="0 0 12 12"><use href="#preset"/></svg>
<svg style="left:1903px;top:223px;color:#555" width="4" height="12"><use href="#dots"/></svg>
<div class="ih" style="top:240px"></div>
<svg style="left:1221px;top:248px;color:#7a7a7a" width="9" height="8"><use href="#tri-d"/></svg>
<svg style="left:1235px;top:243px" width="14" height="16" viewBox="0 0 14 16"><path d="M.5 .5h9l4 4v11H.5z" fill="#fafafa" stroke="#bdbdbd" stroke-width="1"/><path d="M5 4l-1 8M8.5 4l-1 8M3 6.5h7M2.5 9.5h7" stroke="#1e8a2a" stroke-width="1.2"/></svg>
<div class="chk" style="left:1255px;top:245px"></div><svg style="left:1257px;top:248px" width="9" height="8" viewBox="0 0 9 8"><path d="M.8 4l2.6 2.6L8.3 1" fill="none" stroke="#333" stroke-width="1.4"/></svg>
<span class="t b" style="left:1275px;top:244px">Spatialize On Off (Script)</span>
<svg style="left:1860px;top:246px;color:#555" width="11" height="11" viewBox="0 0 12 12"><use href="#help"/></svg>
<svg style="left:1880px;top:246px;color:#555" width="11" height="11" viewBox="0 0 12 12"><use href="#preset"/></svg>
<svg style="left:1903px;top:245px;color:#555" width="4" height="12"><use href="#dots"/></svg>
<div class="a" style="left:1214px;top:262px;width:703px;height:48px;background:#c0c0c0"></div>
<span class="t" style="left:1234px;top:268px;color:#8a8a8a">Script</span>
<div class="fld" style="left:1512px;top:267px;width:401px;height:16px;background:#d6d6d6;border-color:#c0c0c0"></div>
<svg style="left:1515px;top:269px" width="10" height="12" viewBox="0 0 10 12"><path d="M.5 .5h6.5l2.5 2.5v8.5H.5z" fill="#eaeaea" stroke="#c5c5c5" stroke-width="1"/><path d="M4 3l-.8 6M6.5 3l-.8 6M2.3 5h5.2M2 7.2h5.2" stroke="#88b890" stroke-width=".9"/></svg>
<span class="t" style="left:1527px;top:268px;color:#8a8a8a">SpatializeOnOff</span>
<svg style="left:1897px;top:269px" width="12" height="12" viewBox="0 0 12 12"><circle cx="6" cy="6" r="5" fill="none" stroke="#9a9a9a" stroke-width="1"/><circle cx="6" cy="6" r="1.8" fill="#9a9a9a"/></svg>
<span class="t" style="left:1234px;top:288px">Button Text Object</span>
<div class="fld" style="left:1512px;top:287px;width:401px;height:16px;background:#ececec"></div>
<div class="a" style="left:1895px;top:288px;width:17px;height:14px;background:#dedede"></div>
<svg style="left:1514px;top:289px;" width="13" height="13" viewBox="0 0 16 16"><use href="#prefab"/></svg>
<span class="t" style="left:1527px;top:288px">TextMeshPro</span>
<svg style="left:1897px;top:289px" width="12" height="12" viewBox="0 0 12 12"><circle cx="6" cy="6" r="5" fill="none" stroke="#555" stroke-width="1"/><circle cx="6" cy="6" r="1.8" fill="#555"/></svg>
<div class="a" style="left:1214px;top:310px;width:703px;height:1px;background:#8f8f8f"></div>
<div class="a" style="left:1214px;top:311px;width:703px;height:54px;background:#cacaca"></div>
<div class="a" style="left:1230px;top:317px;width:32px;height:32px;background:#d2d2d2"></div>
<div class="a" style="left:1231px;top:318px;width:30px;height:30px;border-radius:50%;background:#000"></div>
<span class="t" style="left:1270px;top:317px;font-size:13.8px;line-height:18px;letter-spacing:.22px">Spatial Audio Texture</span>
<svg style="left:1872px;top:319px;color:#555" width="11" height="11" viewBox="0 0 12 12"><use href="#help"/></svg>
<svg style="left:1888px;top:319px;color:#555" width="11" height="11" viewBox="0 0 12 12"><use href="#preset"/></svg>
<svg style="left:1903px;top:318px" width="12" height="12" viewBox="0 0 12 12"><path d="M6 0l1 1.8 2-.6.4 2 2 .6-.7 2 .7 2-2 .6-.4 2-2-.6L6 12l-1-1.8-2 .6-.4-2-2-.6.7-2-.7-2 2-.6.4-2 2 .6z" fill="#555"/><circle cx="6" cy="6" r="2" fill="#cacaca"/></svg>
<svg style="left:1221px;top:351px;color:#7a7a7a" width="8" height="9"><use href="#tri-r"/></svg>
<span class="t" style="left:1267px;top:341px">Shader</span>
<div class="dd" style="left:1319px;top:340px;width:594px;height:16px"></div>
<span class="t" style="left:1322px;top:340px">Mixed Reality Toolkit/Standard</span>
<svg style="left:1900px;top:346px" width="8" height="5" viewBox="0 0 8 5"><path d="M0 0h8L4 5z" fill="#555"/></svg>
<div class="a" style="left:1214px;top:365px;width:703px;height:1px;background:#8f8f8f"></div>
<div class="a" style="left:1214px;top:374px;width:703px;height:1px;background:#8f8f8f"></div>
<div class="a" style="left:1451px;top:383px;width:229px;height:24px;background:#e4e4e4;border:1px solid #b0b0b0;border-bottom-color:#999;border-radius:3px"></div>
<span class="t" style="left:1521px;top:387px">Add Component</span>

<!-- PROJECT -->
<div class="a" style="left:0;top:622px;width:1212px;height:2px;background:#8a8a8a"></div>
<div class="tabbar" style="left:0;top:624px;width:1212px"></div>
<div class="tab" style="left:0;top:624px;width:78px"></div>
<div class="ptool" style="left:0;top:642px;width:1212px"></div>
<div class="a" style="left:0;top:663px;width:282px;height:334px;background:#c3c3c3"></div>
<div class="a" style="left:282px;top:663px;width:930px;height:334px;background:#bebebe;border-left:1px solid #999"></div>

<svg style="left:5px;top:629px" width="12" height="10" viewBox="0 0 12 10"><path d="M0 .8A.8.8 0 0 1 .8 0h3.4l1.2 1.3h5.8a.8.8 0 0 1 .8.8V10H0z" fill="#555"/></svg>
<span class="t" style="left:21px;top:627px">Project</span>
<svg style="left:87px;top:627px" width="11" height="12" viewBox="0 0 11 12"><rect x=".6" y=".6" width="9.8" height="10.8" fill="none" stroke="#555" stroke-width="1.2"/><path d="M2.5 3.5h6M2.5 6h6M2.5 8.5h6" stroke="#555" stroke-width="1"/></svg>
<span class="t" style="left:103px;top:627px">Console</span>
<svg style="left:174px;top:627px" width="12" height="12" viewBox="0 0 12 12"><path d="M2 0v12M6 0v12M10 0v12" stroke="#555" stroke-width="1"/><path d="M.5 7h3M4.5 4h3M8.5 6h3" stroke="#555" stroke-width="1.8"/></svg>
<span class="t" style="left:191px;top:627px">Audio Mixer</span>
<svg style="left:1178px;top:627px;color:#555" width="10" height="12"><use href="#lock"/></svg>
<svg style="left:1197px;top:627px;color:#555" width="4" height="12"><use href="#dots"/></svg>
<svg style="left:5px;top:647px" width="12" height="12" viewBox="0 0 12 12"><path d="M6 0v12M0 6h12" stroke="#444" stroke-width="1.6"/></svg>
<svg style="left:21px;top:650px" width="8" height="5" viewBox="0 0 8 5"><path d="M0 0h8L4 5z" fill="#555"/></svg>
<div class="search" style="left:791px;top:646px;width:299px;height:15px"></div>
<svg style="left:796px;top:649px" width="8" height="9" viewBox="0 0 8 9" fill="none" stroke="#666" stroke-width="1.1"><circle cx="3.3" cy="3.3" r="2.5"/><path d="M5 5.2L7.5 8"/></svg>
<div class="sep" style="left:1093px;top:643px;width:1px;height:20px;background:#aaa"></div>
<div class="sep" style="left:1119px;top:643px;width:1px;height:20px;background:#aaa"></div>
<div class="sep" style="left:1145px;top:643px;width:1px;height:20px;background:#aaa"></div>
<div class="sep" style="left:1171px;top:643px;width:1px;height:20px;background:#aaa"></div>
<svg style="left:1099px;top:645px" width="14" height="14" viewBox="0 0 14 14"><rect x="1" y="1" width="5.5" height="5.5" fill="#555"/><circle cx="3.5" cy="10" r="3.3" fill="#555"/><path d="M9 4l4 6.5H5z" fill="#555"/></svg>
<svg style="left:1125px;top:646px" width="13" height="12" viewBox="0 0 13 12"><path d="M7 0h6v6l-6.5 6L0 5.5z" fill="#555"/><circle cx="10.3" cy="2.7" r="1" fill="#cbcbcb"/></svg>
<svg style="left:1151px;top:646px" width="13" height="12" viewBox="0 0 13 12"><path d="M6.5 0l1.6 4.2 4.4.2-3.5 2.8 1.2 4.3-3.7-2.5-3.7 2.5 1.2-4.3L.5 4.4l4.4-.2z" fill="#8a8a8a"/></svg>
<svg style="left:1177px;top:646px" width="15" height="12" viewBox="0 0 15 12"><path d="M1 6.5C3 3.5 5 2.5 7.5 2.5S12 3.5 14 6.5C12 9.5 10 10.5 7.5 10.5S3 9.5 1 6.5z" fill="none" stroke="#444" stroke-width="1.1"/><path d="M7.5 3.5a3 3 0 0 0-2.6 4.5L8.8 3.8A3 3 0 0 0 7.5 3.5z" fill="#444"/><path d="M2.5 11.5L11.5 1" stroke="#444" stroke-width="1.5"/></svg>
<span class="t" style="left:1193px;top:646px">14</span>
<svg style="left:3px;top:668px;color:#7a7a7a" width="8" height="9"><use href="#tri-r"/></svg>
<svg style="left:16px;top:666px" width="12" height="11" viewBox="0 0 12 11"><path d="M6 0l1.6 3.7 4.1.3-3.1 2.7 1 4L6 8.5 2.4 10.7l1-4L.3 4l4.1-.3z" fill="#e4a400"/></svg>
<span class="t b" style="left:33px;top:664px">Favorites</span>
<div class="a" style="left:0;top:695px;width:282px;height:16px;background:#b3b3b3"></div>
<svg style="left:3px;top:700px;color:#7a7a7a" width="9" height="8"><use href="#tri-d"/></svg>
<svg style="left:16px;top:698px" width="14" height="10" viewBox="0 0 14 10"><path d="M0 .8A.8.8 0 0 1 .8 0h3.4l1.2 1.3h4.8a.8.8 0 0 1 .8.8V3H3L0 10z" fill="#555"/><path d="M3.5 4H14l-3 6H.5z" fill="#555"/><path d="M1.3 9.3L3.7 4.8" stroke="#b3b3b3" stroke-width=".8"/></svg>
<span class="t b" style="left:33px;top:695px">Assets</span>
<svg style="left:30px;top:713px;color:#555" width="12" height="11" viewBox="0 0 14 12"><use href="#folder"/></svg>
<span class="t" style="left:46px;top:711px">Materials</span>
<svg style="left:17px;top:731px;color:#7a7a7a" width="8" height="9"><use href="#tri-r"/></svg>
<svg style="left:30px;top:729px;color:#555" width="12" height="11" viewBox="0 0 14 12"><use href="#folder"/></svg>
<span class="t" style="left:46px;top:727px">Microsoft.SpatialAudio.Spatializer.Unity</span>
<svg style="left:17px;top:747px;color:#7a7a7a" width="8" height="9"><use href="#tri-r"/></svg>
<svg style="left:30px;top:745px;color:#555" width="12" height="11" viewBox="0 0 14 12"><use href="#folder"/></svg>
<span class="t" style="left:46px;top:743px">MixedRealityToolkit.Generated</span>
<svg style="left:17px;top:763px;color:#7a7a7a" width="8" height="9"><use href="#tri-r"/></svg>
<svg style="left:30px;top:761px;color:#555" width="12" height="11" viewBox="0 0 14 12"><use href="#folder"/></svg>
<span class="t" style="left:46px;top:759px">MRTK</span>
<svg style="left:30px;top:777px;color:#555" width="12" height="11" viewBox="0 0 14 12"><use href="#folder"/></svg>
<span class="t" style="left:46px;top:775px">Scenes</span>
<svg style="left:17px;top:795px;color:#7a7a7a" width="8" height="9"><use href="#tri-r"/></svg>
<svg style="left:30px;top:793px;color:#555" width="12" height="11" viewBox="0 0 14 12"><use href="#folder"/></svg>
<span class="t" style="left:46px;top:791px">TextMesh Pro</span>
<svg style="left:17px;top:811px;color:#7a7a7a" width="8" height="9"><use href="#tri-r"/></svg>
<svg style="left:30px;top:809px;color:#555" width="12" height="11" viewBox="0 0 14 12"><use href="#folder"/></svg>
<span class="t" style="left:46px;top:807px">XR</span>
<svg style="left:3px;top:827px;color:#7a7a7a" width="8" height="9"><use href="#tri-r"/></svg>
<svg style="left:16px;top:825px;color:#555" width="12" height="11" viewBox="0 0 14 12"><use href="#folder"/></svg>
<span class="t b" style="left:33px;top:823px">Packages</span>
<div class="a" style="left:283px;top:663px;width:929px;height:21px;background:#d3d3d3;border-bottom:1px solid #aaa"></div>
<span class="t b" style="left:286px;top:666px">Assets</span>
<svg style="left:300px;top:688px;color:#555" width="12" height="11" viewBox="0 0 14 12"><use href="#folder"/></svg>
<span class="t" style="left:316px;top:686px">Materials</span>
<svg style="left:300px;top:704px;color:#555" width="12" height="11" viewBox="0 0 14 12"><use href="#folder"/></svg>
<span class="t" style="left:316px;top:702px">Microsoft.SpatialAudio.Spatializer.Unity</span>
<svg style="left:300px;top:720px;color:#555" width="12" height="11" viewBox="0 0 14 12"><use href="#folder"/></svg>
<span class="t" style="left:316px;top:718px">MixedRealityToolkit.Generated</span>
<svg style="left:300px;top:736px;color:#555" width="12" height="11" viewBox="0 0 14 12"><use href="#folder"/></svg>
<span class="t" style="left:316px;top:734px">MRTK</span>
<svg style="left:300px;top:752px;color:#555" width="12" height="11" viewBox="0 0 14 12"><use href="#folder"/></svg>
<span class="t" style="left:316px;top:750px">Scenes</span>
<svg style="left:300px;top:768px;color:#555" width="12" height="11" viewBox="0 0 14 12"><use href="#folder"/></svg>
<span class="t" style="left:316px;top:766px">TextMesh Pro</span>
<svg style="left:300px;top:784px;color:#555" width="12" height="11" viewBox="0 0 14 12"><use href="#folder"/></svg>
<span class="t" style="left:316px;top:782px">XR</span>
<svg style="left:298px;top:801px" width="16" height="9" viewBox="0 0 16 9"><rect width="16" height="9" fill="#2a1c08"/><path d="M0 5l4-3 5 2 7-3v5l-5 3H0z" fill="#6a4a18"/><path d="M2 6l3-2 4 1.5 6-3" stroke="#b08030" stroke-width="1" fill="none"/><rect x="0" y="6" width="2.5" height="3" fill="#c8c0b0"/></svg>
<span class="t" style="left:316px;top:798px">Microsoft HoloLens - Spatial Sound-PTPvx7mDon4</span>
<svg style="left:284px;top:818px;color:#7a7a7a" width="8" height="9"><use href="#tri-r"/></svg>
<svg style="left:299px;top:815px" width="13" height="14" viewBox="0 0 13 14"><path d="M2 0v14M6.5 0v14M11 0v14" stroke="#e0a000" stroke-width="1.2"/><path d="M0 9h4M4.5 4h4M9 7h4" stroke="#e0a000" stroke-width="2"/></svg>
<span class="t" style="left:316px;top:814px">Spatial Audio Mixer</span>
<svg style="left:300px;top:831px" width="14" height="14" viewBox="0 0 14 14"><rect x=".6" y=".6" width="11" height="11" fill="#e8e8e8" stroke="#2a78d8" stroke-width="1.2"/><path d="M2 2h2v2H2zM6 2h2v2H6zM4 4h2v2H4zM8 4h2v2H8zM2 6h2v2H2zM6 6h2v2H6z" fill="#777"/><path d="M5 11c1.5-2 3-2.8 4.5-2.8s3 .8 4.5 2.8c-1.5 2-3 2.8-4.5 2.8S6.5 13 5 11z" fill="#bebebe" stroke="#555"/><circle cx="9.5" cy="11" r="1.4" fill="#555"/></svg>
<span class="t" style="left:316px;top:830px">Spatial Audio Texture</span>
<svg style="left:299px;top:846px" width="13" height="15" viewBox="0 0 14 16"><path d="M.5 .5h9l4 4v11H.5z" fill="#fafafa" stroke="#bdbdbd" stroke-width="1"/><path d="M5 4l-1 8M8.5 4l-1 8M3 6.5h7M2.5 9.5h7" stroke="#1e8a2a" stroke-width="1.3"/></svg>
<span class="t" style="left:316px;top:846px">SpatializeOnOff</span>
<div class="a" style="left:283px;top:976px;width:929px;height:21px;background:#d2d2d2;border-top:1px solid #aaa"></div>
<div class="a" style="left:1146px;top:986px;width:50px;height:2px;background:#8a8a8a"></div>
<div class="a" style="left:1141px;top:982px;width:10px;height:10px;border-radius:50%;background:#606060"></div>
</body></html>
